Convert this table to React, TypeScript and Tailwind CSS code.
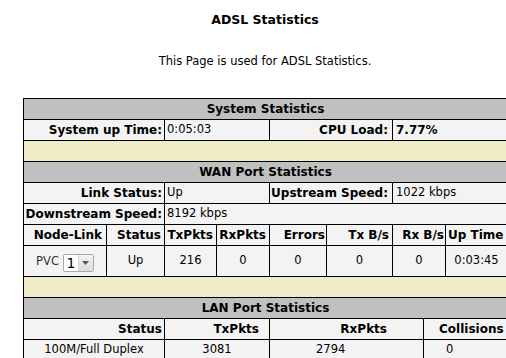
import React from "react";

const gray = "bg-[#c0c0c0]";
const light = "bg-[#f3f3f3]";
const yellow = "bg-[#efebc6]";

function Section({ title }: { title: string }) {
  return (
    <div className={`flex h-[21px] items-center justify-center border-b border-black ${gray} text-[12px] font-bold`}>
      {title}
    </div>
  );
}

function Spacer() {
  return <div className={`h-[21px] border-b border-black ${yellow}`} />;
}

export default function App() {
  return (
    <div className="w-[506px] h-[358px] overflow-hidden bg-white text-black font-['DejaVu_Sans',Verdana,sans-serif]">
      <div className="w-[530px] flex flex-col items-center">
        <h1 className="pt-[12px] text-[12.5px] leading-[16px] font-bold">ADSL Statistics</h1>
        <p className="mt-[26px] text-[11.5px] leading-[14px]">This Page is used for ADSL Statistics.</p>

        <div className="mt-[30px] w-[484px] border-t border-l border-black text-[11.5px]">
          <Section title="System Statistics" />
          <div className={`flex h-[21px] border-b border-black ${light}`}>
            <div className="w-[141px] border-r border-black flex items-center justify-end pr-[2px] text-[12px] font-bold">System up Time:</div>
            <div className="w-[105px] border-r border-black flex items-center pl-[2px]">0:05:03</div>
            <div className="w-[123px] border-r border-black flex items-center justify-end pr-[4px] text-[12px] font-bold">CPU Load:</div>
            <div className="flex-1 flex items-center pl-[3px] text-[12px] font-bold">7.77%</div>
          </div>
          <Spacer />

          <Section title="WAN Port Statistics" />
          <div className={`flex h-[21px] border-b border-black ${light}`}>
            <div className="w-[141px] border-r border-black flex items-center justify-end pr-[2px] text-[12px] font-bold">Link Status:</div>
            <div className="w-[105px] border-r border-black flex items-center pl-[2px]">Up</div>
            <div className="w-[123px] border-r border-black flex items-center justify-end pr-[4px] text-[12px] font-bold">Upstream Speed:</div>
            <div className="flex-1 flex items-center pl-[3px]">1022 kbps</div>
          </div>
          <div className={`flex h-[21px] border-b border-black ${light}`}>
            <div className="w-[141px] border-r border-black flex items-center justify-end pr-[2px] text-[12px] font-bold">Downstream Speed:</div>
            <div className="flex-1 flex items-center pl-[2px]">8192 kbps</div>
          </div>

          {/* per-PVC counters */}
          <div className={`flex h-[21px] border-b border-black ${light} text-[12px] font-bold`}>
            <div className="w-[83px] border-r border-black flex items-center justify-end pr-[4px]">Node-Link</div>
            <div className="w-[58px] border-r border-black flex items-center justify-end pr-[3px]">Status</div>
            <div className="w-[52px] border-r border-black flex items-center justify-end pr-[3px]">TxPkts</div>
            <div className="w-[53px] border-r border-black flex items-center justify-end pr-[3px]">RxPkts</div>
            <div className="w-[57px] border-r border-black flex items-center justify-end pr-[1px]">Errors</div>
            <div className="w-[66px] border-r border-black flex items-center justify-end pr-[3px]">Tx B/s</div>
            <div className="w-[53px] border-r border-black flex items-center justify-end pr-[1px]">Rx B/s</div>
            <div className="flex-1 flex items-center pl-[2px]">Up Time</div>
          </div>
          <div className={`flex h-[31px] border-b border-black ${light}`}>
            <div className="w-[83px] border-r border-black flex items-center justify-center gap-[4px] text-[#333]">
              <span className="mt-[2px]">PVC</span>
              <div className="mt-[4px] flex h-[18px] w-[31px] items-stretch rounded-[2px] border border-[#a9a9a9] bg-white">
                <span className="flex w-[14px] items-center justify-center text-[14px] text-black">1</span>
                <span className="flex flex-1 items-center justify-center border-l border-[#d4d4d4] bg-gradient-to-b from-[#f4f4f4] to-[#dcdcdc]">
                  <svg width="7" height="4" viewBox="0 0 7 4">
                    <path d="M0 0h7L3.5 4z" fill="#555" />
                  </svg>
                </span>
              </div>
            </div>
            <div className="w-[58px] border-r border-black flex items-center justify-center">Up</div>
            <div className="w-[52px] border-r border-black flex items-center justify-center">216</div>
            <div className="w-[53px] border-r border-black flex items-center justify-center">0</div>
            <div className="w-[57px] border-r border-black flex items-center justify-center">0</div>
            <div className="w-[66px] border-r border-black flex items-center justify-center">0</div>
            <div className="w-[53px] border-r border-black flex items-center justify-center">0</div>
            <div className="flex-1 flex items-center justify-center">0:03:45</div>
          </div>
          <Spacer />

          <Section title="LAN Port Statistics" />
          <div className={`flex h-[21px] border-b border-black ${light} text-[12px] font-bold`}>
            <div className="w-[141px] border-r border-black flex items-center justify-end pr-[2px]">Status</div>
            <div className="w-[105px] border-r border-black flex items-center justify-end pr-[10px]">TxPkts</div>
            <div className="w-[154px] border-r border-black flex items-center justify-end pr-[36px]">RxPkts</div>
            <div className="flex-1 flex items-center pl-[15px]">Collisions</div>
          </div>
          <div className={`flex h-[21px] border-b border-black ${light}`}>
            <div className="w-[141px] border-r border-black flex items-center justify-center">100M/Full Duplex</div>
            <div className="w-[105px] border-r border-black flex items-center justify-center">3081</div>
            <div className="w-[154px] border-r border-black flex items-center pl-[46px]">2794</div>
            <div className="flex-1 flex items-center pl-[22px]">0</div>
          </div>
        </div>
      </div>
    </div>
  );
}
